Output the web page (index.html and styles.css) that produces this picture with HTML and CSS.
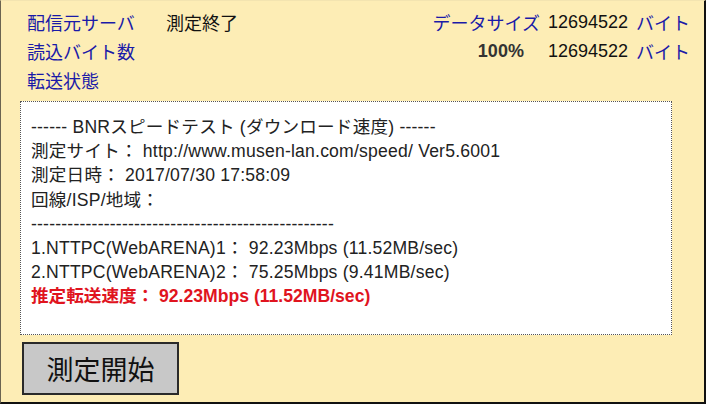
FILE: index.html
```html
<!DOCTYPE html>
<html lang="ja">
<head>
<meta charset="utf-8">
<link rel="stylesheet" href="styles.css">
</head>
<body>
<div class="page">
  <div class="top">
    <div class="left">
      <div class="row"><span class="label w1">配信元サーバ</span><span class="val">測定終了</span></div>
      <div class="row"><span class="label">読込バイト数</span></div>
      <div class="row"><span class="label">転送状態</span></div>
    </div>
    <div class="right">
      <div class="row"><span class="label">データサイズ</span><span class="num">12694522</span><span class="label">バイト</span></div>
      <div class="row"><span class="pct">100%</span><span class="num">12694522</span><span class="label">バイト</span></div>
    </div>
  </div>
  <div class="result">
    <div class="line">------ BNRスピードテスト (ダウンロード速度) ------</div>
    <div class="line">測定サイト： http://www.musen-lan.com/speed/ Ver5.6001</div>
    <div class="line">測定日時： 2017/07/30 17:58:09</div>
    <div class="line">回線/ISP/地域：</div>
    <div class="line">--------------------------------------------------</div>
    <div class="line">1.NTTPC(WebARENA)1： 92.23Mbps (11.52MB/sec)</div>
    <div class="line">2.NTTPC(WebARENA)2： 75.25Mbps (9.41MB/sec)</div>
    <div class="line red">推定転送速度： 92.23Mbps (11.52MB/sec)</div>
  </div>
  <button class="start">測定開始</button>
</div>
</body>
</html>
```
FILE: styles.css
```css
html, body {
  margin: 0;
  padding: 0;
}
body {
  width: 706px;
  height: 404px;
  overflow: hidden;
  background: #fdedb5;
  font-family: "Liberation Sans", "Noto Sans CJK JP", sans-serif;
}
.page {
  box-sizing: border-box;
  width: 706px;
  height: 404px;
  border-left: 1px solid #6b6450;
  border-right: 2px solid #111;
  border-bottom: 2px solid #111;
  border-top: 1px solid #f3e4b0;
  padding: 6px 0 0 19px;
  display: flex;
  flex-direction: column;
}
.top {
  display: flex;
  justify-content: space-between;
  padding-left: 7px;
  padding-right: 14px;
  height: 94px;
}
.row {
  height: 30px;
  display: flex;
  align-items: center;
  font-size: 18px;
}
.row + .row {
  margin-top: -1px;
}
.label {
  color: #1a1aa8;
  font-family: "Noto Sans CJK JP", sans-serif;
  font-size: 18px;
}
.w1 {
  width: 139px;
}
.val {
  color: #111;
  font-family: "Noto Sans CJK JP", sans-serif;
}
.right .row {
  justify-content: flex-end;
}
.num {
  color: #111;
  margin: 0 8px;
}
.pct {
  font-weight: bold;
  color: #333;
  margin-right: 16px;
}
.result {
  width: 652px;
  height: 234px;
  box-sizing: border-box;
  background: #fff;
  border: 1px dotted #555;
  margin-left: 0;
  padding: 13px 0 0 10px;
  font-size: 17.6px;
  letter-spacing: 0.2px;
  color: #222;
}
.line {
  height: 24.2px;
  line-height: 24px;
  white-space: nowrap;
}
.red {
  color: #e0141e;
  font-weight: bold;
  letter-spacing: 0;
}
.start {
  margin: 7px 0 0 2px;
  width: 157px;
  height: 53px;
  background: #c8c8c8;
  border: 2px solid #2a2a2a;
  font-family: "Noto Sans CJK JP", sans-serif;
  font-size: 27px;
  color: #111;
  padding: 0;
  text-align: center;
}
```
